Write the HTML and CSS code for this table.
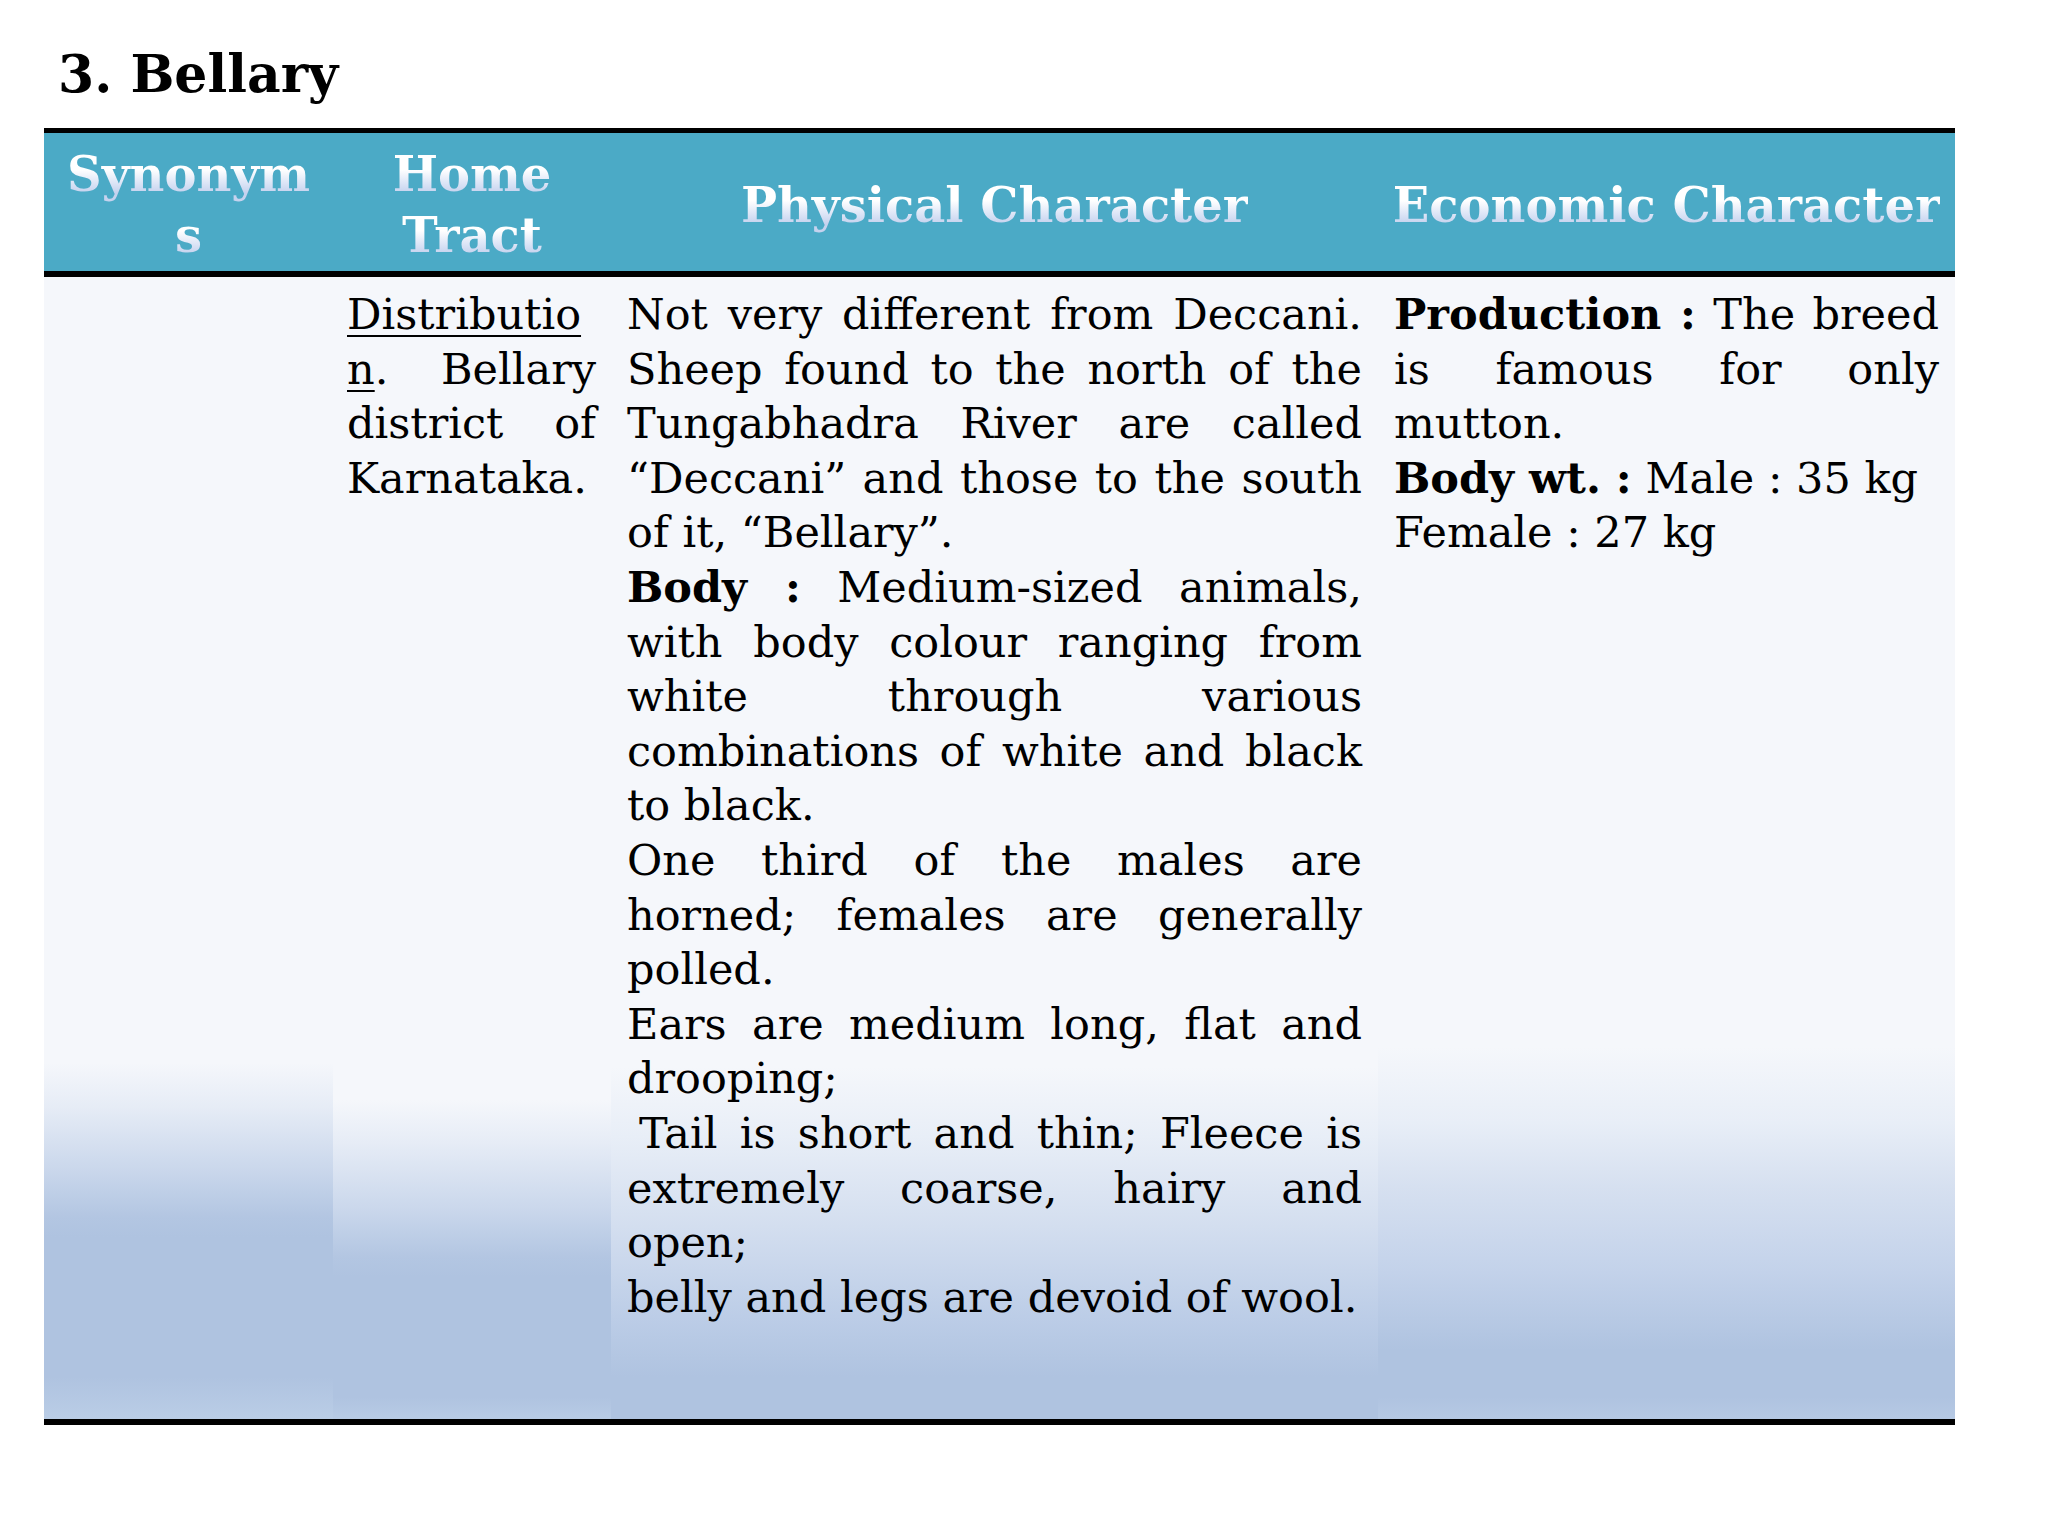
FILE: index.html
```html
<!DOCTYPE html>
<html lang="en">
<head>
<meta charset="utf-8">
<title>3. Bellary</title>
<link rel="stylesheet" href="styles.css">
</head>
<body>
<div class="page">
  <h1 class="title">3. Bellary</h1>
  <div class="breed-table">
    <div class="row head-row">
      <div class="th"><div class="ht">Synonym<br>s</div></div>
      <div class="th"><div class="ht">Home<br>Tract</div></div>
      <div class="th"><div class="ht">Physical Character</div></div>
      <div class="th"><div class="ht">Economic Character</div></div>
    </div>
    <div class="row body-row">
      <div class="td c1"></div>
      <div class="td c2">
        <span class="ln"><u>Distributio</u></span>
        <span class="ln"><u>n</u>. Bellary</span>
        <span class="ln">district of</span>
        <span class="ln end">Karnataka.</span>
      </div>
      <div class="td c3">
        <span class="ln">Not very different from Deccani.</span>
        <span class="ln">Sheep found to the north of the</span>
        <span class="ln">Tungabhadra River are called</span>
        <span class="ln">“Deccani” and those to the south</span>
        <span class="ln end">of it, “Bellary”.</span>
        <span class="ln"><b>Body :</b> Medium-sized animals,</span>
        <span class="ln">with body colour ranging from</span>
        <span class="ln">white through various</span>
        <span class="ln">combinations of white and black</span>
        <span class="ln end">to black.</span>
        <span class="ln">One third of the males are</span>
        <span class="ln">horned; females are generally</span>
        <span class="ln end">polled.</span>
        <span class="ln">Ears are medium long, flat and</span>
        <span class="ln end">drooping;</span>
        <span class="ln indent">Tail is short and thin; Fleece is</span>
        <span class="ln">extremely coarse, hairy and</span>
        <span class="ln end">open;</span>
        <span class="ln end">belly and legs are devoid of wool.</span>
      </div>
      <div class="td c4">
        <span class="ln"><b>Production :</b> The breed</span>
        <span class="ln">is famous for only</span>
        <span class="ln end">mutton.</span>
        <span class="ln end"><b>Body wt. :</b> Male : 35 kg</span>
        <span class="ln end">Female : 27 kg</span>
      </div>
    </div>
  </div>
</div>
</body>
</html>
```

FILE: styles.css
```css
html, body {
  margin: 0;
  padding: 0;
  background: #ffffff;
}

.page {
  width: 2048px;
  height: 1536px;
  padding-left: 44px;
  box-sizing: border-box;
  font-family: "DejaVu Serif", "Liberation Serif", serif;
  color: #000;
}

.title {
  margin: 44px 0 0 14px;
  font-family: "DejaVu Serif", serif;
  font-weight: bold;
  font-size: 52px;
  line-height: 60px;
  height: 60px;
  color: #000;
}

.breed-table {
  margin-top: 24px;
  width: 1911px;
}

.row {
  display: grid;
  grid-template-columns: 289px 278px 767px 577px;
}

.head-row {
  height: 138px;
  background: #4baac6;
  border-top: 5px solid #000;
  border-bottom: 6px solid #000;
}

.th {
  display: flex;
  align-items: center;
  justify-content: center;
  text-align: center;
  padding-top: 6px;
}

.ht {
  font-family: "DejaVu Serif", serif;
  font-weight: bold;
  font-size: 48px;
  line-height: 61px;
  color: transparent;
  background-image: linear-gradient(180deg, #ffffff 0%, #ffffff 42%, #dfe7f7 62%, #c5d2ee 80%, #c5d2ee 100%);
  background-size: 100% 61px;
  background-repeat: repeat;
  -webkit-background-clip: text;
  background-clip: text;
}

.body-row {
  height: 1142px;
  border-bottom: 6px solid #000;
}

.td {
  padding: 10px 16px 0 16px;
  font-size: 43px;
  line-height: 54.6px;
  color: #000;
}

.ln {
  display: block;
  text-align: justify;
  text-align-last: justify;
}

.ln.end {
  text-align: left;
  text-align-last: left;
}

.ln.indent {
  text-indent: 12px;
}

.ln u {
  text-decoration-thickness: 2px;
  text-underline-offset: 6px;
}

.c1 {
  background: linear-gradient(180deg,
    #f5f7fb 0px, #f5f7fb 786px, #e6ecf6 830px, #cbd8ec 890px,
    #b3c6e2 940px, #afc3e0 960px, #afc3e0 1100px, #bacde6 1142px);
}

.c2 {
  padding-left: 14px;
  padding-right: 15px;
  background: linear-gradient(180deg,
    #f5f7fb 0px, #f5f7fb 823px, #e6ecf6 866px, #cbd8ec 930px,
    #b3c6e2 980px, #afc3e0 1000px, #afc3e0 1120px, #b8cbe5 1142px);
}

.c3 {
  background: linear-gradient(180deg,
    #f5f7fb 0px, #f5f7fb 790px, #e8eef7 860px, #d3deef 950px,
    #bccde7 1040px, #afc3e0 1100px, #afc3e0 1142px);
}

.c4 {
  background: linear-gradient(180deg,
    #f5f7fb 0px, #f5f7fb 770px, #e8eef7 845px, #d6e0f0 910px,
    #c3d2ea 995px, #afc3e0 1073px, #afc3e0 1120px, #b6c9e4 1142px);
}
```
